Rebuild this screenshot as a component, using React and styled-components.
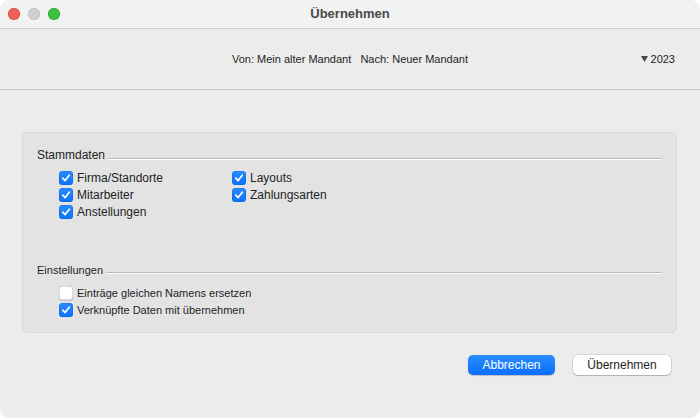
import React from "react";
import styled, { createGlobalStyle } from "styled-components";

const GlobalStyle = createGlobalStyle`
  html, body { margin: 0; padding: 0; background: #ffffff; }
  body { font-family: "Liberation Sans", Arial, Helvetica, sans-serif; }
  * { box-sizing: border-box; }
`;

const Window = styled.div`
  width: 700px;
  height: 418px;
  border-radius: 10px;
  overflow: hidden;
  background: #ececec;
  display: flex;
  flex-direction: column;
  color: #1e1e1e;
`;

const TitleBar = styled.div`
  height: 29px;
  flex: none;
  background: #f2f2f2;
  border-bottom: 1px solid #cdcdcd;
  display: grid;
  grid-template-columns: 1fr auto 1fr;
  align-items: center;
`;

const Lights = styled.div`
  display: flex;
  gap: 8px;
  padding-left: 8px;
  padding-bottom: 1px;
`;

const Light = styled.span`
  width: 12px;
  height: 12px;
  border-radius: 50%;
  background: ${(p) => p.$color};
  box-shadow: inset 0 0 0 0.5px ${(p) => p.$edge};
`;

const Title = styled.div`
  font-size: 13px;
  font-weight: bold;
  color: #4a4a4a;
  padding-bottom: 1px;
`;

const Header = styled.div`
  height: 61px;
  flex: none;
  border-bottom: 1px solid #c6c6c6;
  display: grid;
  grid-template-columns: 1fr auto 1fr;
  align-items: center;
  font-size: 11px;
  padding-bottom: 1px;
`;

const Center = styled.div`
  grid-column: 2;
  white-space: pre;
`;

const Year = styled.div`
  justify-self: end;
  padding-right: 25px;
  display: flex;
  align-items: center;
  gap: 3px;
`;

const Body = styled.div`
  flex: 1;
  padding: 42px 23px 0 22px;
  display: flex;
  flex-direction: column;
`;

const Group = styled.div`
  background: #e3e3e3;
  border: 1px solid #d9d9d9;
  border-radius: 5px;
  padding: 15px 14px 14px 14px;
  display: flex;
  flex-direction: column;
`;

const SectionHead = styled.div`
  display: flex;
  align-items: flex-end;
  gap: 3px;
  font-size: ${(p) => p.$size}px;
  line-height: ${(p) => p.$size + 2}px;
  margin-top: ${(p) => p.$top}px;
`;

const Rule = styled.div`
  flex: 1;
  height: 2px;
  border-top: 1px solid #b9b9b9;
  border-bottom: 1px solid #ffffff;
  margin-bottom: ${(p) => p.$mb}px;
`;

const Options = styled.div`
  display: grid;
  grid-template-columns: 173px auto;
  grid-auto-rows: 17px;
  padding-left: 22px;
  margin-top: ${(p) => p.$top}px;
  font-size: ${(p) => p.$size}px;
`;

const Option = styled.label`
  display: flex;
  align-items: center;
  gap: 4px;
  grid-column: ${(p) => p.$col};
  white-space: nowrap;
`;

const Box = styled.span`
  width: 14px;
  height: 14px;
  flex: none;
  border-radius: 3.5px;
  display: flex;
  align-items: center;
  justify-content: center;
  background: ${(p) => (p.$checked ? "linear-gradient(#2a8bff, #0b73fb)" : "#ffffff")};
  box-shadow: ${(p) =>
    p.$checked
      ? "inset 0 0 0 0.5px rgba(0,60,160,0.35)"
      : "inset 0 0 0 0.5px rgba(0,0,0,0.28), 0 0.5px 1px rgba(0,0,0,0.12)"};
`;

const Buttons = styled.div`
  display: flex;
  justify-content: flex-end;
  gap: 18px;
  margin-top: 22px;
  padding-right: 6px;
`;

const Button = styled.button`
  height: 20px;
  width: ${(p) => p.$w}px;
  border: none;
  border-radius: 5px;
  font-family: inherit;
  font-size: 12px;
  padding: 0;
  color: ${(p) => (p.$primary ? "#ffffff" : "#1e1e1e")};
  background: ${(p) => (p.$primary ? "linear-gradient(#2a8cff, #0a70fd)" : "#ffffff")};
  box-shadow: ${(p) =>
    p.$primary
      ? "0 0.5px 1px rgba(0,0,0,0.2)"
      : "0 0 0 0.5px rgba(0,0,0,0.18), 0 1px 1px rgba(0,0,0,0.18)"};
`;

const Check = ({ checked, label, col = 1 }) => (
  <Option $col={col}>
    <Box $checked={checked}>
      {checked && (
        <svg width="10" height="10" viewBox="0 0 10 10">
          <path d="M1.8 5.2 L4.1 7.6 L8.3 2.2" fill="none" stroke="#fff" strokeWidth="1.7" strokeLinecap="round" strokeLinejoin="round" />
        </svg>
      )}
    </Box>
    <span>{label}</span>
  </Option>
);

export default function App() {
  return (
    <>
      <GlobalStyle />
      <Window>
        <TitleBar>
          <Lights>
            <Light $color="#ee5f57" $edge="#d44a42" />
            <Light $color="#cfcfcf" $edge="#b9b9b9" />
            <Light $color="#3cc13f" $edge="#2ea531" />
          </Lights>
          <Title>Übernehmen</Title>
        </TitleBar>
        <Header>
          <Center>{"Von: Mein alter Mandant   Nach: Neuer Mandant"}</Center>
          <Year>
            <svg width="7" height="6" viewBox="0 0 7 6">
              <path d="M0 0 H7 L3.5 6 Z" fill="#4a4a4a" />
            </svg>
            <span>2023</span>
          </Year>
        </Header>
        <Body>
          <Group>
            <SectionHead $size={12} $top={0}>
              <span>Stammdaten</span>
              <Rule $mb={2} />
            </SectionHead>
            <Options $top={7} $size={12}>
              <Check checked label="Firma/Standorte" />
              <Check checked label="Layouts" col={2} />
              <Check checked label="Mitarbeiter" />
              <Check checked label="Zahlungsarten" col={2} />
              <Check checked label="Anstellungen" />
            </Options>
            <SectionHead $size={11} $top={44}>
              <span>Einstellungen</span>
              <Rule $mb={3} />
            </SectionHead>
            <Options $top={7} $size={11}>
              <Check checked={false} label="Einträge gleichen Namens ersetzen" />
              <Check checked label="Verknüpfte Daten mit übernehmen" />
            </Options>
          </Group>
          <Buttons>
            <Button $primary $w={87}>Abbrechen</Button>
            <Button $w={98}>Übernehmen</Button>
          </Buttons>
        </Body>
      </Window>
    </>
  );
}
